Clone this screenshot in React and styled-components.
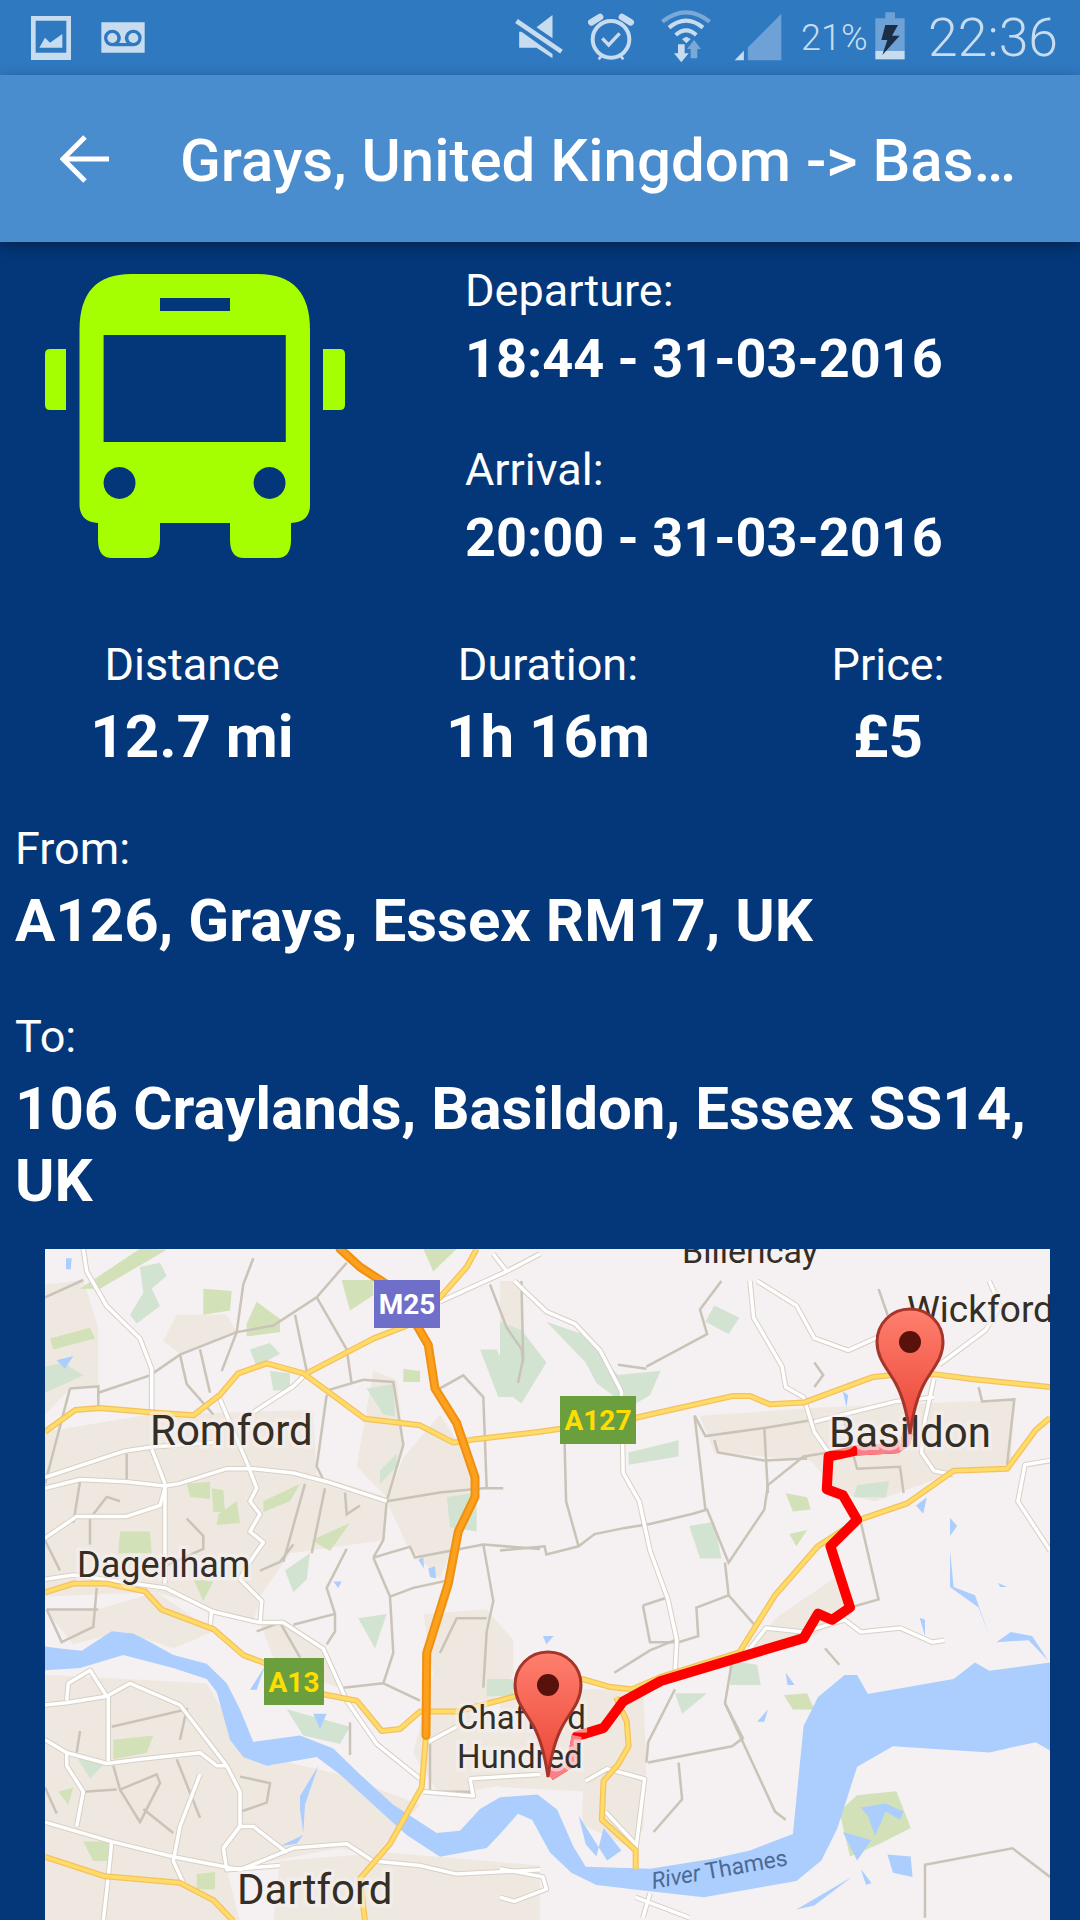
import React from "react";
import styled, { createGlobalStyle } from "styled-components";

const GlobalStyle = createGlobalStyle`
html, body {
    margin : 0;
    padding : 0;
    width : 1080px;
    height : 1920px;
    overflow : hidden;
    background : #03377a;
}
`
// two crops were used to read the map, each one has its own scale
const L = (pts) => pts.map(([x, y]) => [40 + x / 3, 1240 + y / 2.306])
const R = (pts) => pts.map(([x, y]) => [500 + x / 2.8, 1280 + y / 2.45])
const d = (pts, close) => "M" + pts.map((p) => p[0].toFixed(1) + " " + p[1].toFixed(1)).join("L") + (close ? "Z" : "")

const beige = [
    L([[15,440],[330,400],[820,390],[830,540],[1040,590],[1030,690],[750,720],[660,820],[640,880],[350,810],[15,820]]),
    L([[15,1000],[500,1020],[620,1180],[900,1230],[1140,1300],[1000,1420],[900,1400],[560,1450],[600,1568],[15,1568]]),
    L([[410,170],[560,170],[590,210],[420,260],[370,230]]),
    L([[1150,860],[1340,850],[1420,920],[1420,1000],[1340,1080],[1500,1240],[1200,1280],[1120,1180],[1180,1000]]),
    L([[720,1430],[1040,1410],[1500,1440],[1500,1568],[700,1568]]),
    L([[1000,300],[1070,320],[1090,460],[1040,590],[950,520]]),
    L([[15,850],[170,850],[350,810],[520,900],[400,940],[250,900],[100,930]]),
    L([[660,880],[760,885],[860,950],[900,1030],[780,1000],[700,960]]),
    L([[15,100],[130,90],[175,200],[175,340],[90,340],[15,400]]),
    L([[1090,500],[1200,400],[1300,520],[1280,620],[1200,780],[1100,700],[1040,600]]),
    R([[560,330],[900,310],[1440,290],[1430,450],[1270,470],[1050,540],[950,520],[870,440],[600,420]]),
    R([[0,1020],[230,1000],[400,1000],[410,1180],[400,1350],[230,1250],[0,1240]]),
    R([[780,820],[950,720],[980,800],[880,870],[700,900]]),
    R([[0,0],[60,0],[60,120],[0,170]]),
    R([[240,1000],[410,1130],[380,1395],[230,1330]]),
]
const greens = [
    L([[180,110],[380,20],[300,18],[120,110]]),
    L([[30,225],[150,200],[165,225],[40,250]]),
    L([[490,110],[575,115],[570,160],[490,170]]),
    L([[620,190],[650,140],[720,180],[720,210],[620,220]]),
    L([[905,90],[1000,90],[1000,125],[930,160]]),
    L([[1090,295],[1140,300],[1140,325],[1090,325]]),
    L([[440,560],[510,555],[510,595],[450,590]]),
    L([[515,570],[550,575],[555,625],[520,625]]),
    L([[535,630],[590,600],[600,650],[530,655]]),
    L([[670,600],[780,560],[750,600],[670,625]]),
    L([[240,670],[330,670],[335,720],[235,720]]),
    L([[815,690],[930,650],[870,715]]),
    L([[460,780],[520,785],[490,830]]),
    L([[220,1150],[340,1140],[320,1180],[220,1195]]),
    L([[55,1270],[100,1260],[85,1300]]),
    L([[470,1460],[525,1455],[525,1495],[470,1495]]),
    L([[130,1385],[205,1385],[205,1430],[160,1430]]),
    L([[1150,18],[1250,18],[1180,70]]),
    R([[795,1015],[860,1010],[880,1050],[820,1050]]),
    R([[950,1300],[1000,1260],[1110,1250],[1150,1340],[1060,1380],[980,1410]]),
    R([[800,520],[860,530],[870,560],[820,565]]),
    R([[810,620],[860,610],[830,650]]),
]
const pale = [
    L([[300,60],[360,50],[380,80],[335,110],[360,150],[290,190],[270,170],[310,120]]),
    L([[630,250],[690,235],[720,260],[650,290]]),
    L([[690,300],[750,305],[750,345],[700,345]]),
    L([[980,340],[1060,330],[1065,405],[1030,400]]),
    L([[1320,250],[1370,250],[1400,300],[1440,300],[1450,360],[1375,360]]),
    L([[1020,530],[1070,490],[1070,520],[1020,560]]),
    L([[735,760],[810,720],[800,780],[760,810]]),
    L([[955,870],[1040,860],[1005,940]]),
    L([[1220,590],[1310,580],[1310,670],[1230,660]]),
    L([[1340,1010],[1420,1010],[1420,1050],[1340,1050]]),
    L([[740,1080],[930,1120],[900,1160],[790,1140]]),
    L([[110,1190],[200,1200],[150,1240]]),
    L([[15,290],[70,280],[130,310],[15,350]]),
    R([[130,100],[230,130],[330,230],[450,220],[420,280],[360,310],[270,250],[240,200]]),
    R([[0,100],[60,120],[130,200],[60,300],[0,260]]),
    R([[530,600],[600,590],[620,680],[560,680]]),
    R([[360,420],[500,390],[500,430],[360,450]]),
    R([[600,60],[670,90],[640,130],[575,100]]),
    R([[1000,500],[1090,490],[1080,530],[990,530]]),
    R([[640,930],[720,940],[730,990],[645,990]]),
    R([[490,1010],[580,1010],[510,1060]]),
]
const river = [
    ...L([[15,935],[60,940],[125,945],[215,900],[280,905],[330,925],[400,955],[500,975],[560,1020],[600,1080],[640,1155],[780,1140],[880,1170],[960,1230],[1060,1300],[1190,1365],[1260,1360],[1320,1310]]),
    ...R([[0,1265],[105,1258],[160,1295],[205,1385],[240,1435],[420,1440],[600,1415],[700,1395],[820,1355],[850,1090],[890,1020],[965,965],[1000,965],[1030,1012],[1270,975],[1330,935],[1370,955],[1540,935],[1540,1150],[1500,1130],[1370,1155],[1100,1140],[1000,1190],[945,1340],[900,1420],[830,1470],[570,1510],[420,1495],[270,1480],[200,1450],[140,1400],[90,1320],[50,1305],[0,1355]]),
    ...L([[1340,1400],[1200,1420],[1100,1370],[1000,1300],[900,1230],[830,1190],[680,1210],[610,1190],[570,1150],[530,1040],[500,1010],[400,985],[250,955],[120,985],[15,990]]),
]
const ponds = [
    L([[50,275],[100,265],[75,295]]),
    L([[78,40],[95,40],[92,65],[78,65]]),
    L([[880,785],[905,785],[895,800]]),
    L([[1135,735],[1150,730],[1152,755]]),
    L([[1165,755],[1185,750],[1188,778],[1170,775]]),
    L([[630,1035],[675,980],[650,1035]]),
    L([[780,1280],[835,1210],[795,1300],[790,1365],[780,1310]]),
    L([[720,1395],[790,1370],[770,1390]]),
    L([[820,1090],[860,1090],[840,1125]]),
    R([[120,870],[150,870],[130,890]]),
    R([[1260,660],[1270,750],[1330,770],[1370,870],[1340,800],[1260,750]]),
    R([[1430,860],[1490,870],[1535,930],[1480,880],[1390,885]]),
    R([[800,960],[825,990],[805,990]]),
    R([[720,1080],[750,1050],[740,1080]]),
    R([[1010,1440],[1040,1475],[1025,1480]]),
    R([[830,1540],[985,1460],[880,1530]]),
    R([[1010,1290],[1080,1280],[1130,1300],[1120,1320],[1080,1300],[1050,1360],[1030,1310]]),
    R([[960,1350],[1040,1370],[1000,1420]]),
    R([[1085,1405],[1150,1410],[1155,1460],[1100,1450]]),
    R([[1165,550],[1195,530],[1185,570]]),
    R([[1260,580],[1280,600],[1260,625]]),
    R([[1215,750],[1235,710],[1220,740]]),
    R([[1395,740],[1420,750],[1400,750]]),
    R([[1175,825],[1190,830],[1190,870]]),
    R([[960,270],[975,280],[970,310]]),
    R([[220,1310],[300,1420],[340,1395],[290,1340],[270,1410],[240,1380]]),
]
const minor = [
    L([[15,130],[130,90]]),
    L([[90,340],[175,335],[175,380]]),
    L([[15,560],[90,340]]),
    L([[175,350],[330,310],[420,262],[590,210],[700,195],[830,130],[920,50]]),
    L([[420,262],[440,330],[520,400]]),
    L([[480,250],[510,350]]),
    L([[590,210],[545,300]]),
    L([[590,210],[610,100],[640,40]]),
    L([[765,170],[800,300]]),
    L([[830,130],[920,250],[935,330]]),
    L([[860,355],[830,520],[850,550]]),
    L([[860,345],[970,320],[1060,325],[1090,470],[1040,600],[1030,690],[1000,730]]),
    L([[1040,600],[1200,580],[1330,570],[1390,570]]),
    L([[1000,730],[1110,705],[1125,730],[1330,700],[1500,710]]),
    L([[1000,730],[1050,820],[1060,950],[1030,1020]]),
    L([[1050,820],[1120,800],[1240,780]]),
    L([[1330,700],[1360,830],[1340,900],[1330,1030]]),
    L([[1200,340],[1270,310],[1330,360],[1340,570]]),
    L([[1200,950],[1250,870],[1340,870]]),
    L([[920,710],[860,800],[885,860],[885,900],[860,930]]),
    L([[885,860],[760,885]]),
    L([[760,700],[720,740],[660,760]]),
    L([[795,560],[730,740]]),
    L([[855,570],[815,720]]),
    L([[915,580],[920,630],[960,610]]),
    L([[120,555],[100,650]]),
    L([[150,640],[150,700]]),
    L([[260,490],[260,550]]),
    L([[240,600],[200,590],[150,640]]),
    L([[15,690],[60,760]]),
    L([[20,850],[175,850]]),
    L([[170,800],[160,890],[65,925],[20,850]]),
    L([[440,640],[490,680],[490,710],[375,750]]),
    L([[910,1030],[1030,1020],[1140,1060]]),
    L([[930,1110],[930,1185]]),
    L([[650,900],[720,880],[780,960]]),
    L([[120,1130],[110,1180]]),
    L([[215,1120],[440,1080],[420,1150]]),
    L([[220,1210],[240,1265],[350,1230],[360,1250],[300,1340],[240,1265]]),
    L([[130,1270],[230,1265]]),
    L([[310,1310],[400,1365]]),
    L([[410,1195],[480,1330]]),
    L([[600,1235],[690,1250],[680,1295],[605,1315]]),
    L([[15,1260],[50,1320]]),
    L([[1190,1270],[1290,1270]]),
    L([[1170,1160],[1170,1270]]),
    L([[1350,100],[1400,200],[1445,250],[1450,280]]),
    R([[60,0],[65,190],[50,250]]),
    R([[0,660],[125,650],[130,670],[220,650],[265,620],[350,605],[420,595],[540,570],[580,560],[640,690],[740,560],[750,500],[850,430],[920,420]]),
    R([[180,370],[185,540],[220,650]]),
    R([[410,210],[580,130],[560,70],[620,0]]),
    R([[330,205],[410,215]]),
    R([[545,330],[575,380],[740,360],[880,340]]),
    R([[600,390],[610,420],[740,440],[860,435]]),
    R([[740,360],[750,520]]),
    R([[575,560],[545,330]]),
    R([[630,690],[640,770],[720,850]]),
    R([[640,770],[550,800],[555,870],[500,885]]),
    R([[400,795],[470,775]]),
    R([[400,795],[420,885],[500,885]]),
    R([[320,960],[420,905],[490,880]]),
    R([[490,1000],[415,1130],[410,1180]]),
    R([[415,1180],[650,1140],[680,1120],[630,1035],[650,930]]),
    R([[630,1035],[770,1300],[800,1320]]),
    R([[910,900],[950,940]]),
    R([[1010,590],[1060,780],[980,800]]),
    R([[1190,1560],[1190,1430],[1435,1390],[1540,1460]]),
    R([[500,1180],[510,1270],[430,1350]]),
    R([[960,330],[1000,460],[1120,455],[1130,520]]),
    R([[1340,260],[1350,295],[1440,290],[1420,450]]),
    R([[1060,20],[1100,120],[1200,220]]),
    R([[880,200],[905,230],[880,260]]),
]
const white = [
    L([[130,18],[140,70],[200,150],[300,225],[335,295],[335,395]]),
    L([[335,480],[375,560],[375,790]]),
    L([[15,545],[250,485],[335,475],[520,465]]),
    L([[15,570],[120,550],[260,555],[375,565],[415,560],[560,525],[640,525],[760,535],[860,555],[1040,600]]),
    L([[540,365],[620,510],[650,570],[630,600],[660,630],[630,670],[670,695],[620,750],[600,780],[665,830],[660,880]]),
    L([[15,685],[110,635],[260,635],[360,610],[375,570]]),
    L([[15,780],[100,770],[375,800],[520,855],[660,880],[730,880],[850,940],[920,1060],[1010,1160],[1140,1240]]),
    L([[640,395],[760,335],[800,305]]),
    L([[1200,140],[1400,70],[1500,30]]),
    L([[1400,70],[1360,30]]),
    L([[15,1070],[80,1065],[200,1050],[270,1020],[420,1070],[560,1210],[600,1270],[600,1350],[550,1400],[560,1450],[720,1440]]),
    L([[80,1060],[85,1020],[150,990],[200,1050]]),
    L([[15,1150],[80,1180],[200,1205],[300,1195],[480,1180],[530,1210],[560,1210]]),
    L([[80,1180],[80,1210],[130,1270],[110,1350]]),
    L([[205,1050],[205,1200]]),
    L([[15,1340],[215,1385],[400,1420],[600,1450],[760,1400],[920,1390],[1000,1430],[1140,1440],[1250,1460],[1500,1450]]),
    L([[480,1230],[420,1350],[400,1430],[430,1480]]),
    L([[1165,1155],[1250,1120]]),
    L([[1290,1240],[1500,1230]]),
    L([[1290,1240],[1300,1280],[1150,1270]]),
    L([[550,1400],[600,1350],[640,1350],[740,1410]]),
    L([[215,1385],[205,1465],[190,1568]]),
    L([[515,850],[510,890]]),
    R([[40,0],[130,75],[210,105],[280,170],[340,270],[345,470],[390,540],[420,660],[470,780],[495,880],[490,960]]),
    R([[700,0],[710,90],[790,210],[800,260],[850,285],[880,370],[920,420]]),
    R([[720,0],[830,60],[880,140],[975,170],[1090,125],[1200,110]]),
    R([[1230,205],[1360,120],[1400,60],[1370,0]]),
    R([[880,345],[1110,295],[1215,285]]),
    R([[1215,240],[1190,340],[1180,420],[1215,465],[1270,475]]),
    R([[700,900],[745,850],[850,860],[890,850],[965,830],[1010,860],[1120,850],[1210,885],[1245,880]]),
    R([[240,1225],[300,1195],[405,1220],[380,1395]]),
    R([[295,1300],[380,1380]]),
    R([[0,1440],[120,1460],[130,1490],[40,1520],[0,1510]]),
    R([[420,1500],[400,1560]]),
    R([[380,1510],[530,1560]]),
    R([[1540,440],[1470,450],[1450,540],[1540,660]]),
]
const yellow = [
    [...L([[15,440],[105,390],[180,385],[330,395],[460,402],[540,355],[595,305],[680,282],[790,305],[975,410],[1140,425],[1240,465],[1300,458],[1500,440]]), ...R([[170,362],[380,335],[650,282],[700,282],[755,302],[850,298],[1045,235],[1100,230],[1215,228],[1320,240],[1540,260]])],
    L([[800,305],[1000,225],[1100,195],[1200,130],[1280,60],[1310,18]]),
    [...L([[15,810],[100,790],[200,790],[315,808],[365,850],[520,895],[610,955],[680,975],[850,1045],[950,1060],[1025,1130],[1080,1125],[1140,1085],[1250,1085]]), ...R([[230,975],[310,995],[370,1000],[450,970],[670,910],[770,770],[890,650],[1005,585],[1140,545],[1270,465],[1420,460],[1500,365],[1540,335]])],
    L([[1158,1140],[1145,1260],[1050,1390],[960,1470],[975,1568]]),
    L([[15,1420],[195,1465],[420,1480],[520,1520],[580,1568]]),
    R([[325,1020],[355,1080],[360,1140],[330,1185],[290,1225],[285,1320],[380,1395],[380,1440]]),
]
const motorway = L([[900,18],[960,60],[1060,110],[1135,200],[1165,240],[1185,340],[1250,420],[1305,545],[1305,590],[1255,670],[1225,790],[1160,950],[1158,1140]])
const route = R([[140,1212],[200,1180],[215,1115],[290,1095],[345,1030],[450,980],[850,875],[890,815],[930,830],[980,800],[925,650],[1000,585],[960,525],[915,510],[920,430],[1000,415],[1110,410],[1135,395],[1148,350]])
// the route shows through pale where the place names cover it
const routeFaded = [
    R([[140,1212],[200,1180],[215,1115]]),
    R([[1000,415],[1110,410],[1135,395],[1148,350]]),
]

const labels = [
    { name : "Romford", x : 150, y : 1444, size : 42 },
    { name : "Dagenham", x : 77, y : 1576, size : 36 },
    { name : "Dartford", x : 237, y : 1903, size : 42 },
    { name : "Chafford", x : 457, y : 1728, size : 33 },
    { name : "Hundred", x : 457, y : 1767, size : 33 },
    { name : "Basildon", x : 829, y : 1446, size : 42 },
    { name : "Wickford", x : 907, y : 1321, size : 37 },
    { name : "Billericay", x : 682, y : 1262, size : 34 },
]
const shields = [
    { name : "M25", x : 374, y : 1279, w : 66, h : 48, fill : "#6f6fc9", ink : "#ffffff" },
    { name : "A127", x : 560, y : 1395, w : 76, h : 48, fill : "#6b9f3e", ink : "#ffdd00" },
    { name : "A13", x : 264, y : 1657, w : 60, h : 47, fill : "#6b9f3e", ink : "#ffdd00" },
]

function Pin({ x, y }){
    return(
        <g transform={`translate(${x} ${y})`}>
            <path d="M0 0C19 0 33 15 33 33C33 50 22 60 14 75C7 88 3 104 0 125C-3 104 -7 88 -14 75C-22 60 -33 50 -33 33C-33 15 -19 0 0 0Z" fill="url(#pinFill)" stroke="#a5352a" strokeWidth="3"/>
            <ellipse cx="0" cy="33" rx="11" ry="11" fill="#58120b"/>
        </g>
    )
}

function RouteMap(){
    return(
        <MapSvg viewBox="45 1248 1005 672">
            <defs>
                <linearGradient id="pinFill" x1="0" y1="0" x2="0" y2="1">
                    <stop offset="0" stopColor="#ff7f6e"/>
                    <stop offset="1" stopColor="#ea4435"/>
                </linearGradient>
            </defs>
            <rect x="45" y="1248" width="1005" height="672" fill="#f5f0f1"/>
            {beige.map((p, i) => <path key={i} d={d(p, true)} fill="#efe8e0"/>)}
            {pale.map((p, i) => <path key={i} d={d(p, true)} fill="#d3e3d2"/>)}
            {greens.map((p, i) => <path key={i} d={d(p, true)} fill="#d2e1b8"/>)}
            <path d={d(river, true)} fill="#abcefe"/>
            {ponds.map((p, i) => <path key={i} d={d(p, true)} fill="#abcefe"/>)}
            {minor.map((p, i) => <path key={i} d={d(p)} fill="none" stroke="#c9c3b8" strokeWidth="2.5"/>)}
            {white.map((p, i) => <path key={i} d={d(p)} fill="none" stroke="#d6d0c6" strokeWidth="5.5" strokeLinejoin="round"/>)}
            {white.map((p, i) => <path key={i} d={d(p)} fill="none" stroke="#ffffff" strokeWidth="3.5" strokeLinejoin="round"/>)}
            {yellow.map((p, i) => <path key={i} d={d(p)} fill="none" stroke="#f5c060" strokeWidth="6" strokeLinejoin="round"/>)}
            {yellow.map((p, i) => <path key={i} d={d(p)} fill="none" stroke="#fedc66" strokeWidth="3.5" strokeLinejoin="round"/>)}
            <path d={d(motorway)} fill="none" stroke="#ef9010" strokeWidth="9" strokeLinejoin="round" strokeLinecap="round"/>
            <path d={d(motorway)} fill="none" stroke="#fca01e" strokeWidth="5" strokeLinejoin="round" strokeLinecap="round"/>
            <path d={d(route)} fill="none" stroke="#ff0000" strokeWidth="10" strokeLinejoin="round"/>
            {routeFaded.map((p, i) => <path key={i} d={d(p)} fill="none" stroke="#fb7f88" strokeWidth="10" strokeLinejoin="round"/>)}
            {shields.map((s) => (
                <g key={s.name}>
                    <rect x={s.x} y={s.y} width={s.w} height={s.h} fill={s.fill}/>
                    <ShieldText x={s.x + s.w / 2} y={s.y + s.h / 2 + 10} fill={s.ink}>{s.name}</ShieldText>
                </g>
            ))}
            {labels.map((l) => <PlaceText key={l.name} x={l.x} y={l.y} $size={l.size}>{l.name}</PlaceText>)}
            <RiverText transform="translate(653 1888) rotate(-10)"><tspan fontStyle="italic">River</tspan> Thames</RiverText>
            <Pin x={910} y={1308}/>
            <Pin x={548} y={1651}/>
        </MapSvg>
    )
}

function BusIcon(){
    return(
        <BusSvg viewBox="45 273 300 285">
            <path fill="#a5ff00" fillRule="evenodd" d="M79.5 330Q79.5 274 131 274H258Q310 274 310 330V505Q310 522 291 523V540Q291 558 277 558H244Q230 558 230 540V523H160V540Q160 558 146 558H112Q98 558 98 540V523Q80 522 79.5 505ZM160 298V311H230V298ZM103.6 335V442H285.8V335ZM119.5 467A16 16 0 1 0 119.6 467ZM269.5 467A16 16 0 1 0 269.6 467Z"/>
            <path fill="#a5ff00" d="M50 349H66V410H50Q45 410 45 405V354Q45 349 50 349ZM323 349H340Q345 349 345 354V405Q345 410 340 410H323Z"/>
        </BusSvg>
    )
}

export default function App(){
    return(
        <>
        <GlobalStyle/>
        <Page>
            <StatusBar>
                <StatusGroup>
                    <StatusIcon $w={40} viewBox="33 0 120 195">
                        <path fillRule="evenodd" fill="#c8dcf0" d="M33 33H153V165H33ZM47 47V143H139V47Z"/>
                        <path fill="#c8dcf0" d="M58 128L75 98L90 113L127 87V128Z"/>
                    </StatusIcon>
                    <StatusIcon $w={44} viewBox="244 0 130 195">
                        <path fillRule="evenodd" fill="#c8dcf0" d="M244 52H374V143H244ZM277 74A25 25 0 1 0 277 124H340A25 25 0 1 0 340 74A25 25 0 0 0 320 114H297A25 25 0 0 0 277 74ZM277 84A15 15 0 1 1 277 114A15 15 0 1 1 277 84ZM340 84A15 15 0 1 1 340 114A15 15 0 1 1 340 84Z"/>
                    </StatusIcon>
                </StatusGroup>
                <StatusGroup>
                    <StatusIcon $w={52} $gap={23} viewBox="15 0 155 195">
                        <path fill="#c8dcf0" d="M85 67L133 30V100ZM33 80H40L133 147V160L85 128H33Z"/>
                        <path d="M25 48L160 140" stroke="#c8dcf0" strokeWidth="14"/>
                    </StatusIcon>
                    <StatusIcon $w={47} $gap={26} viewBox="240 0 141 195">
                        <circle cx="309" cy="103" r="55" fill="none" stroke="#c8dcf0" strokeWidth="12"/>
                        <path d="M250 52L276 36M342 36L368 52" stroke="#c8dcf0" strokeWidth="20" strokeLinecap="round"/>
                        <path d="M283 100L302 120L335 85" fill="none" stroke="#c8dcf0" strokeWidth="10"/>
                        <path d="M272 163L280 153M346 163L338 153" stroke="#c8dcf0" strokeWidth="8"/>
                    </StatusIcon>
                    <StatusIcon $w={50} $gap={23} viewBox="459 0 150 195">
                        <path d="M463 50Q534 -6 605 50" fill="none" stroke="#7aa9d8" strokeWidth="12"/>
                        <path d="M483 68Q534 26 585 68M503 90Q534 62 565 90" fill="none" stroke="#c8dcf0" strokeWidth="12"/>
                        <path d="M522 102L535 95L548 102L535 115Z" fill="#c8dcf0"/>
                        <path d="M510 118H530V145H542L520 172L498 145H510Z" fill="#c8dcf0"/>
                        <path d="M537 132L558 105L579 132H568V160H548V132Z" fill="#7aa9d8"/>
                    </StatusIcon>
                    <StatusIcon $w={48} $gap={19} viewBox="678 0 146 195">
                        <path d="M720 128L822 25V167H720Z" fill="#6ea1d5"/>
                        <path d="M680 167L708 138V167Z" fill="#c8dcf0"/>
                    </StatusIcon>
                    <Percent>21%</Percent>
                    <StatusIcon $w={30} $gap={23} viewBox="262 0 88 195">
                        <path d="M292 22H321V40H350V138H262V40H292Z" fill="#6ea1d5"/>
                        <path d="M262 138H350V163H262Z" fill="#c8dcf0"/>
                        <path d="M292 60H330L312 92H335L283 150L298 105H280Z" fill="#1c2e45"/>
                    </StatusIcon>
                    <Clock>22:36</Clock>
                </StatusGroup>
            </StatusBar>
            <Toolbar>
                <BackIcon viewBox="0 0 50 50">
                    <path d="M49 25H5M25 3L3 25L25 47" fill="none" stroke="#ffffff" strokeWidth="5"/>
                </BackIcon>
                <Title>Grays, United Kingdom -&gt; Bas…</Title>
            </Toolbar>
            <TopRow>
                <BusIcon/>
                <Times>
                    <Label>Departure:</Label>
                    <Value>18:44 - 31-03-2016</Value>
                    <Label $top={51}>Arrival:</Label>
                    <Value>20:00 - 31-03-2016</Value>
                </Times>
            </TopRow>
            <Stats>
                <Stat>
                    <Label>Distance</Label>
                    <Value $big>12.7 mi</Value>
                </Stat>
                <Stat>
                    <Label>Duration:</Label>
                    <Value $big>1h 16m</Value>
                </Stat>
                <Stat>
                    <Label>Price:</Label>
                    <Value $big>£5</Value>
                </Stat>
            </Stats>
            <Address $top={50}>
                <Label>From:</Label>
                <Value $big>A126, Grays, Essex RM17, UK</Value>
            </Address>
            <Address $top={54}>
                <Label>To:</Label>
                <Value $big $lines>106 Craylands, Basildon, Essex SS14, UK</Value>
            </Address>
            <RouteMap/>
        </Page>
        </>
    )
}

const Page = styled.div`
width : 1080px;
height : 1920px;
overflow : hidden;
background : #03377a;
color : #ffffff;
font-family : Roboto, "Liberation Sans", sans-serif;
`
const StatusBar = styled.div`
height : 75px;
padding : 0 22px 0 31px;
background : #2f79c1;
display : flex;
align-items : center;
justify-content : space-between;
`
const StatusGroup = styled.div`
display : flex;
align-items : center;
gap : 30px;
&:last-child{
    gap : 0;
}
`
const StatusIcon = styled.svg`
display : block;
width : ${(p) => p.$w}px;
height : 65px;
margin-right : ${(p) => p.$gap || 0}px;
`
const Percent = styled.div`
width : 74px;
font-size : 36px;
font-weight : 300;
color : #c8dcf0;
`
const Clock = styled.div`
font-size : 53.5px;
font-weight : 300;
color : #c8dcf0;
`
const Toolbar = styled.div`
position : relative;
height : 167px;
background : #4a8dce;
box-shadow : 0 4px 14px rgba(0,0,0,0.35);
display : flex;
align-items : center;
padding-left : 60px;
`
const BackIcon = styled.svg`
width : 50px;
height : 50px;
margin-right : 70px;
`
const Title = styled.div`
font-size : 60px;
font-weight : 500;
white-space : nowrap;
padding-top : 3px;
`
const TopRow = styled.div`
display : flex;
padding-top : 21px;
`
const BusSvg = styled.svg`
width : 300px;
height : 285px;
margin : 10px 120px 0 45px;
`
const Times = styled.div`
display : flex;
flex-direction : column;
`
const Label = styled.div`
font-size : 45px;
line-height : 56px;
margin-top : ${(p) => p.$top || 0}px;
`
const Value = styled.div`
font-size : ${(p) => (p.$big ? 60 : 54)}px;
font-weight : 700;
line-height : ${(p) => (p.$lines ? 72 : p.$big ? 68 : 64)}px;
margin-top : ${(p) => (p.$big && !p.$lines ? 10 : 8)}px;
`
const Stats = styled.div`
display : grid;
grid-template-columns : 384px 328px 352px;
margin-top : 67px;
`
const Stat = styled.div`
text-align : center;
`
const Address = styled.div`
margin-top : ${(p) => p.$top}px;
padding : 0 15px;
`
const MapSvg = styled.svg`
display : block;
width : 1005px;
height : 672px;
margin : 32px 0 0 45px;
`
const PlaceText = styled.text`
font-family : Roboto, sans-serif;
font-size : ${(p) => p.$size}px;
fill : #352e24;
stroke : rgba(245,240,241,0.6);
stroke-width : 7px;
paint-order : stroke;
`
const ShieldText = styled.text`
font-family : Roboto, sans-serif;
font-size : 28px;
font-weight : 700;
text-anchor : middle;
`
const RiverText = styled.text`
font-family : Roboto, sans-serif;
font-size : 23px;
fill : #4b6a93;
`
